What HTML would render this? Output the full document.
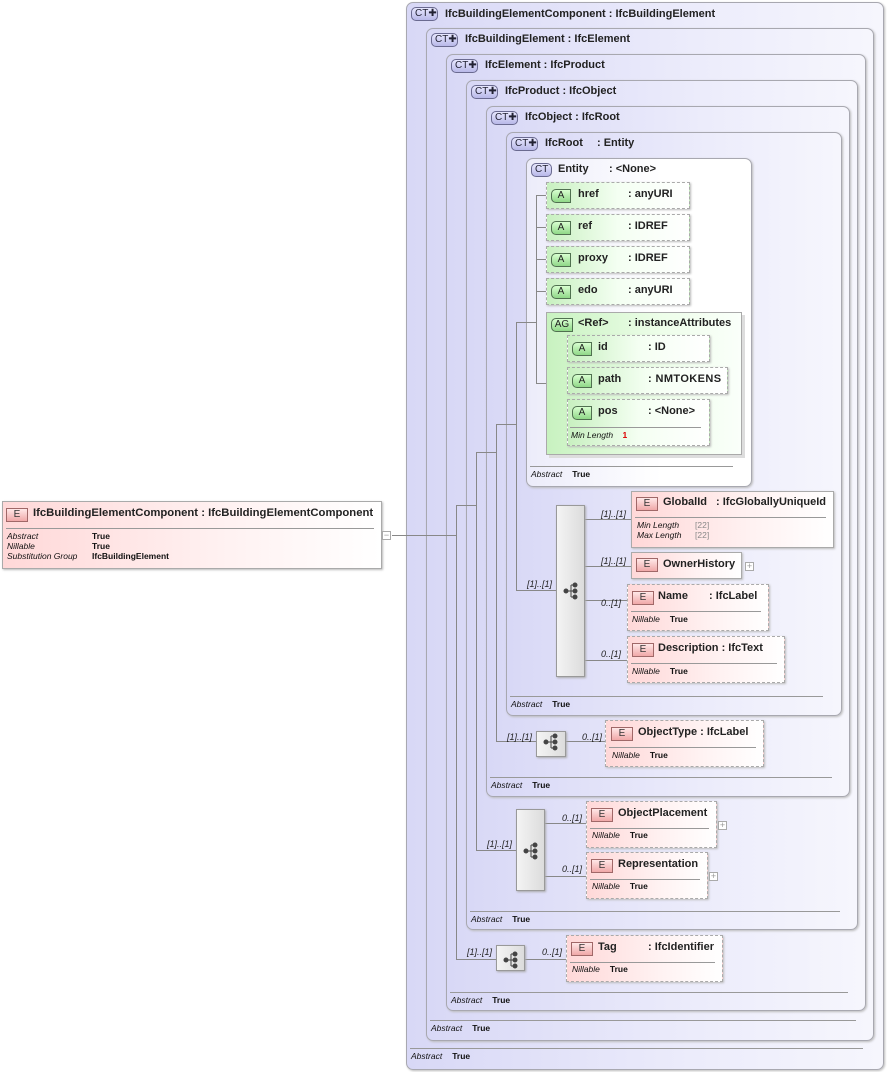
<!DOCTYPE html>
<html><head><meta charset="utf-8"><style>
*{box-sizing:border-box;margin:0;padding:0}
body{width:887px;height:1072px;background:#fff;position:relative;font-family:"Liberation Sans",sans-serif;overflow:hidden}
.ct{position:absolute;border:1px solid #a8a8b0;border-radius:7px;background:linear-gradient(to right,#d8d8f6,#ececfb 60%,#f6f6fd);box-shadow:1px 1px 2px #bbb}
.ct.w{background:linear-gradient(to right,#ececfa,#fff 60%)}
.t{position:absolute;font-size:11px;font-weight:bold;color:#222;white-space:pre}
.badge{position:absolute;height:14px;border:1px solid #6a6a90;border-radius:5px;background:linear-gradient(#e8e8ff,#b8b8e8);font-size:10px;color:#223;line-height:12px;padding-left:3px;font-weight:normal}
.sep{position:absolute;height:1px;background:#999}
.ab{position:absolute;font-size:8.5px;white-space:pre;color:#111}
.ab i{font-style:italic}.ab b{margin-left:10px}
.el{position:absolute;border:1px solid #aaa;background:linear-gradient(to right,#ffd8d8,#fff2f2 60%,#fff);box-shadow:1px 1px 2px #bbb}
.el.d{border:1px dashed #aaa}
.eb{position:absolute;width:22px;height:14px;border:1px solid #a06868;background:linear-gradient(#ffe8e8,#f0a8a8);font-size:10px;text-align:center;line-height:12px;color:#333}
.at{position:absolute;border:1px dashed #aaa;background:linear-gradient(to right,#c8f0c0,#f4fff2 50%,#fff);box-shadow:1px 1px 2px #bbb}
.ab2{position:absolute;width:20px;height:14px;border:1px solid #507050;border-radius:5px 0 0 5px;background:linear-gradient(#d8ffd0,#90d888);font-size:10px;text-align:center;line-height:12px;color:#222}
.seq{position:absolute;border:1px solid #999;background:linear-gradient(to right,#f4f4f4,#dcdcdc);box-shadow:1px 1px 2px #aaa}
.m{position:absolute;font-size:9px;font-style:italic;color:#222;white-space:pre}
.pl{position:absolute;width:9px;height:9px;border:1px solid #aaa;background:#fff;font-size:9px;line-height:7px;text-align:center;color:#999}
</style></head><body>

<div class="ct" style="left:406px;top:2px;width:478px;height:1068px"></div>
<div class="ct" style="left:426px;top:28px;width:448px;height:1013px"></div>
<div class="ct" style="left:446px;top:54px;width:420px;height:957px"></div>
<div class="ct" style="left:466px;top:80px;width:392px;height:850px"></div>
<div class="ct" style="left:486px;top:106px;width:364px;height:691px"></div>
<div class="ct" style="left:506px;top:132px;width:336px;height:584px"></div>
<div class="ct w" style="left:526px;top:158px;width:226px;height:329px"></div>

<div class="badge" style="left:411px;top:7px;width:27px">CT✚</div><div class="t" style="left:445px;top:8px">IfcBuildingElementComponent : IfcBuildingElement</div>
<div class="badge" style="left:431px;top:33px;width:27px">CT✚</div><div class="t" style="left:465px;top:33px">IfcBuildingElement : IfcElement</div>
<div class="badge" style="left:451px;top:59px;width:27px">CT✚</div><div class="t" style="left:485px;top:59px">IfcElement : IfcProduct</div>
<div class="badge" style="left:471px;top:85px;width:27px">CT✚</div><div class="t" style="left:505px;top:85px">IfcProduct : IfcObject</div>
<div class="badge" style="left:491px;top:111px;width:27px">CT✚</div><div class="t" style="left:525px;top:111px">IfcObject : IfcRoot</div>
<div class="badge" style="left:511px;top:137px;width:27px">CT✚</div><div class="t" style="left:545px;top:137px">IfcRoot</div><div class="t" style="left:597px;top:137px">: Entity</div>
<div class="badge" style="left:531px;top:163px;width:21px">CT</div><div class="t" style="left:558px;top:163px">Entity</div><div class="t" style="left:609px;top:163px">: &lt;None&gt;</div>

<div class="sep" style="left:410px;top:1048px;width:453px"></div><div class="ab" style="left:411px;top:1051px"><i>Abstract</i><b>True</b></div>
<div class="sep" style="left:430px;top:1020px;width:426px"></div><div class="ab" style="left:431px;top:1023px"><i>Abstract</i><b>True</b></div>
<div class="sep" style="left:450px;top:992px;width:398px"></div><div class="ab" style="left:451px;top:995px"><i>Abstract</i><b>True</b></div>
<div class="sep" style="left:470px;top:911px;width:370px"></div><div class="ab" style="left:471px;top:914px"><i>Abstract</i><b>True</b></div>
<div class="sep" style="left:490px;top:777px;width:342px"></div><div class="ab" style="left:491px;top:780px"><i>Abstract</i><b>True</b></div>
<div class="sep" style="left:510px;top:696px;width:313px"></div><div class="ab" style="left:511px;top:699px"><i>Abstract</i><b>True</b></div>
<div class="sep" style="left:530px;top:466px;width:203px"></div><div class="ab" style="left:531px;top:469px"><i>Abstract</i><b>True</b></div>

<svg style="position:absolute;left:0;top:0" width="887" height="1072" stroke="#888" stroke-width="1" fill="none">
<path d="M392 535.5H456.5M456.5 505V959.5H496M456.5 505.5H476.5M476.5 452V850.5H516M476.5 452.5H496.5M496.5 424V741.5H536M496.5 424.5H516.5M516.5 322V590.5H556M516.5 322.5H536.5M536.5 195V383.5H557M536.5 195.5H546M536.5 227.5H546M536.5 259.5H546M536.5 291.5H546M557.5 348V412.5H567M557.5 348.5H567M557.5 380.5H567"/>
<path d="M585 519.5H631M585 566.5H631M585 600.5H627M585 660.5H627M566 741.5H605M545 823.5H586M545 876.5H586M525 959.5H566"/>
</svg>

<div class="el" style="left:2px;top:501px;width:380px;height:68px"></div>
<div class="eb" style="left:6px;top:508px">E</div>
<div class="t" style="left:33px;top:507px;font-size:11.3px">IfcBuildingElementComponent : IfcBuildingElementComponent</div>
<div class="sep" style="left:6px;top:528px;width:368px"></div>
<div class="ab" style="left:7px;top:531px;line-height:10px"><i>Abstract</i><br><i>Nillable</i><br><i>Substitution Group</i></div>
<div class="ab" style="left:92px;top:531px;line-height:10px;font-weight:bold">True<br>True<br>IfcBuildingElement</div>
<div class="pl" style="left:382px;top:531px">−</div>

<div class="at" style="left:546px;top:182px;width:144px;height:27px"></div><div class="ab2" style="left:551px;top:189px">A</div><div class="t" style="left:578px;top:188px">href</div><div class="t" style="left:628px;top:188px">: anyURI</div>
<div class="at" style="left:546px;top:214px;width:144px;height:27px"></div><div class="ab2" style="left:551px;top:221px">A</div><div class="t" style="left:578px;top:220px">ref</div><div class="t" style="left:628px;top:220px">: IDREF</div>
<div class="at" style="left:546px;top:246px;width:144px;height:27px"></div><div class="ab2" style="left:551px;top:253px">A</div><div class="t" style="left:578px;top:252px">proxy</div><div class="t" style="left:628px;top:252px">: IDREF</div>
<div class="at" style="left:546px;top:278px;width:144px;height:27px"></div><div class="ab2" style="left:551px;top:285px">A</div><div class="t" style="left:578px;top:284px">edo</div><div class="t" style="left:628px;top:284px">: anyURI</div>

<div style="position:absolute;left:546px;top:312px;width:196px;height:143px;border:1px solid #aaa;background:linear-gradient(to right,#c8f2c0,#eefeea 60%,#fafffa);box-shadow:3px 3px 0 #ddd"></div>
<div class="ab2" style="left:551px;top:318px;width:22px">AG</div><div class="t" style="left:578px;top:317px">&lt;Ref&gt;</div><div class="t" style="left:628px;top:317px">: instanceAttributes</div>
<div class="at" style="left:567px;top:335px;width:143px;height:27px"></div><div class="ab2" style="left:572px;top:342px">A</div><div class="t" style="left:598px;top:341px">id</div><div class="t" style="left:648px;top:341px">: ID</div>
<div class="at" style="left:567px;top:367px;width:161px;height:27px"></div><div class="ab2" style="left:572px;top:374px">A</div><div class="t" style="left:598px;top:373px">path</div><div class="t" style="left:648px;top:373px;letter-spacing:0.4px">: NMTOKENS</div>
<div class="at" style="left:567px;top:399px;width:143px;height:47px"></div><div class="ab2" style="left:572px;top:406px">A</div><div class="t" style="left:598px;top:405px">pos</div><div class="t" style="left:648px;top:405px">: &lt;None&gt;</div>
<div class="sep" style="left:570px;top:427px;width:131px"></div><div class="ab" style="left:571px;top:430px"><i>Min Length</i>    <span style="color:#d00;font-weight:bold">1</span></div>

<div class="seq" style="left:556px;top:505px;width:29px;height:172px"></div>
<div class="m" style="left:527px;top:579px">[1]..[1]</div>
<div class="m" style="left:601px;top:509px">[1]..[1]</div>
<div class="m" style="left:601px;top:556px">[1]..[1]</div>
<div class="m" style="left:601px;top:598px">0..[1]</div>
<div class="m" style="left:601px;top:649px">0..[1]</div>

<div class="el" style="left:631px;top:491px;width:203px;height:57px"></div><div class="eb" style="left:636px;top:497px">E</div><div class="t" style="left:663px;top:496px">GlobalId</div><div class="t" style="left:716px;top:496px">: IfcGloballyUniqueId</div>
<div class="sep" style="left:635px;top:517px;width:191px"></div>
<div class="ab" style="left:637px;top:520px;line-height:10px"><i>Min Length</i><br><i>Max Length</i></div><div class="ab" style="left:695px;top:520px;line-height:10px;color:#888">[22]<br>[22]</div>
<div class="el" style="left:631px;top:552px;width:111px;height:27px"></div><div class="eb" style="left:636px;top:558px">E</div><div class="t" style="left:663px;top:558px">OwnerHistory</div><div class="pl" style="left:745px;top:562px">+</div>
<div class="el d" style="left:627px;top:584px;width:142px;height:47px"></div><div class="eb" style="left:632px;top:591px">E</div><div class="t" style="left:658px;top:590px">Name</div><div class="t" style="left:709px;top:590px">: IfcLabel</div>
<div class="sep" style="left:631px;top:611px;width:130px"></div><div class="ab" style="left:632px;top:614px"><i>Nillable</i><b>True</b></div>
<div class="el d" style="left:627px;top:636px;width:158px;height:47px"></div><div class="eb" style="left:632px;top:643px">E</div><div class="t" style="left:658px;top:642px">Description : IfcText</div>
<div class="sep" style="left:631px;top:663px;width:146px"></div><div class="ab" style="left:632px;top:666px"><i>Nillable</i><b>True</b></div>

<div class="seq" style="left:536px;top:731px;width:30px;height:26px"></div>
<div class="m" style="left:507px;top:732px">[1]..[1]</div><div class="m" style="left:582px;top:732px">0..[1]</div>
<div class="el d" style="left:605px;top:720px;width:159px;height:47px"></div><div class="eb" style="left:611px;top:727px">E</div><div class="t" style="left:638px;top:726px">ObjectType : IfcLabel</div>
<div class="sep" style="left:609px;top:747px;width:147px"></div><div class="ab" style="left:612px;top:750px"><i>Nillable</i><b>True</b></div>

<div class="seq" style="left:516px;top:809px;width:29px;height:82px"></div>
<div class="m" style="left:487px;top:839px">[1]..[1]</div><div class="m" style="left:562px;top:813px">0..[1]</div><div class="m" style="left:562px;top:864px">0..[1]</div>
<div class="el d" style="left:586px;top:801px;width:131px;height:47px"></div><div class="eb" style="left:591px;top:808px">E</div><div class="t" style="left:618px;top:807px">ObjectPlacement</div>
<div class="sep" style="left:590px;top:828px;width:119px"></div><div class="ab" style="left:592px;top:830px"><i>Nillable</i><b>True</b></div><div class="pl" style="left:718px;top:821px">+</div>
<div class="el d" style="left:586px;top:852px;width:122px;height:47px"></div><div class="eb" style="left:591px;top:859px">E</div><div class="t" style="left:618px;top:858px">Representation</div>
<div class="sep" style="left:590px;top:879px;width:110px"></div><div class="ab" style="left:592px;top:881px"><i>Nillable</i><b>True</b></div><div class="pl" style="left:709px;top:872px">+</div>

<div class="seq" style="left:496px;top:945px;width:29px;height:26px"></div>
<div class="m" style="left:467px;top:947px">[1]..[1]</div><div class="m" style="left:542px;top:947px">0..[1]</div>
<div class="el d" style="left:566px;top:935px;width:157px;height:47px"></div><div class="eb" style="left:571px;top:942px">E</div><div class="t" style="left:598px;top:941px">Tag</div><div class="t" style="left:648px;top:941px">: IfcIdentifier</div>
<div class="sep" style="left:570px;top:962px;width:145px"></div><div class="ab" style="left:572px;top:964px"><i>Nillable</i><b>True</b></div>

<svg style="position:absolute;left:0;top:0" width="887" height="1072" fill="#444" stroke="#444" stroke-width="1">
<g id="s"><circle cx="566" cy="591" r="2"/><circle cx="575" cy="585" r="2"/><circle cx="575" cy="591" r="2"/><circle cx="575" cy="597" r="2"/><path d="M566 591H575M571 585V597M571 585H575M571 597H575" fill="none"/></g>
<use href="#s" x="-20" y="151"/><use href="#s" x="-40" y="260"/><use href="#s" x="-60" y="369"/>
</svg>
</body></html>
